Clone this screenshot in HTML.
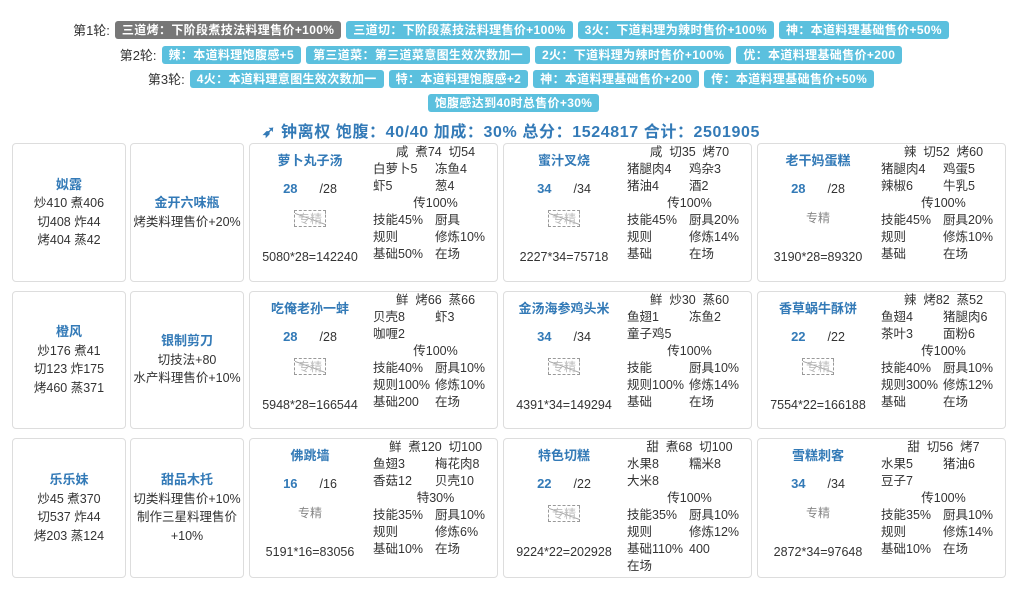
<!DOCTYPE html>
<html><head><meta charset="utf-8"><style>
*{box-sizing:border-box;margin:0;padding:0}
body{width:1022px;height:593px;background:#fff;font-family:"Liberation Sans","Noto Sans CJK SC",sans-serif;font-size:12.5px;color:#333;position:relative;overflow:hidden}
.line{position:absolute;left:0;width:1022px;display:flex;justify-content:center;align-items:center;font-size:13px}
.tag{display:inline-block;background:#5bc0de;color:#fff;font-weight:bold;font-size:12px;letter-spacing:0.35px;padding:0 7px;height:18px;line-height:18px;border-radius:3px;margin-left:5px}
.tag.g{background:#777}
.title{position:absolute;top:118px;left:0;width:1022px;text-align:center;color:#337ab7;font-weight:bold;font-size:16px;letter-spacing:0.6px}
.card{position:absolute;border:1px solid #ddd;border-radius:4px;text-align:center}
.cv{display:flex;flex-direction:column;justify-content:center;line-height:18.5px}
.nm{color:#337ab7;font-weight:bold;font-size:13px}
.rc .l{position:absolute;left:0;width:120px;text-align:center}
.rc .n{top:6px;color:#337ab7;font-weight:bold;font-size:13px}
.rc .q{top:37px}
.rc .q b{color:#337ab7;font-size:13px;margin-right:22px}
.rc .z{top:66px;color:#999;font-size:12px}
.rc .z span{display:inline-block;border:1px dashed #999;padding:0 3px;height:17px;line-height:16px;color:#bbb;background:linear-gradient(20deg,transparent 46%,#888 48%,transparent 52%)}
.rc .z span.p{border:none;background:none;color:#888}
.rc .f{top:106px}
.rr{position:absolute;left:123px;top:0;width:125px;text-align:left;line-height:17px}
.rr div{height:17px;white-space:nowrap}
.rr .c{text-align:center}
.rr i{font-style:normal;display:inline-block;width:62px}
</style></head><body>
<div class="line" style="top:20px">第1轮:<span class="tag g">三道烤：下阶段煮技法料理售价+100%</span><span class="tag">三道切：下阶段蒸技法料理售价+100%</span><span class="tag">3火：下道料理为辣时售价+100%</span><span class="tag">神：本道料理基础售价+50%</span></div>
<div class="line" style="top:45px">第2轮:<span class="tag">辣：本道料理饱腹感+5</span><span class="tag">第三道菜：第三道菜意图生效次数加一</span><span class="tag">2火：下道料理为辣时售价+100%</span><span class="tag">优：本道料理基础售价+200</span></div>
<div class="line" style="top:69px">第3轮:<span class="tag">4火：本道料理意图生效次数加一</span><span class="tag">特：本道料理饱腹感+2</span><span class="tag">神：本道料理基础售价+200</span><span class="tag">传：本道料理基础售价+50%</span></div>
<div class="line" style="top:94px"><span class="tag">饱腹感达到40时总售价+30%</span></div>
<div class="title">➶ 钟离权 饱腹：40/40 加成：30% 总分：1524817 合计：2501905</div>

<div class="card cv" style="left:12px;top:143px;width:114px;height:139px"><div class="nm">姒露</div><div>炒410 煮406</div><div>切408 炸44</div><div>烤404 蒸42</div></div>
<div class="card cv" style="left:130px;top:143px;width:114px;height:139px"><div class="nm">金开六味瓶</div><div>烤类料理售价+20%</div></div>
<div class="card cv" style="left:12px;top:291px;width:114px;height:138px"><div class="nm">橙风</div><div>炒176 煮41</div><div>切123 炸175</div><div>烤460 蒸371</div></div>
<div class="card cv" style="left:130px;top:291px;width:114px;height:138px"><div class="nm">银制剪刀</div><div>切技法+80</div><div>水产料理售价+10%</div></div>
<div class="card cv" style="left:12px;top:438px;width:114px;height:140px"><div class="nm">乐乐妹</div><div>炒45 煮370</div><div>切537 炸44</div><div>烤203 蒸124</div></div>
<div class="card cv" style="left:130px;top:438px;width:114px;height:140px"><div class="nm">甜品木托</div><div>切类料理售价+10%</div><div>制作三星料理售价</div><div>+10%</div></div>

<div class="card rc" style="left:249px;top:143px;width:249px;height:139px"><div class="l n">萝卜丸子汤</div><div class="l q"><b>28</b>/28</div><div class="l z"><span>专精</span></div><div class="l f">5080*28=142240</div>
<div class="rr"><div class="c">咸 &nbsp;煮74 &nbsp;切54</div><div><i>白萝卜5</i>冻鱼4</div><div><i>虾5</i>葱4</div><div class="c">传100%</div><div><i>技能45%</i>厨具</div><div><i>规则</i>修炼10%</div><div><i>基础50%</i>在场</div></div></div>
<div class="card rc" style="left:503px;top:143px;width:249px;height:139px"><div class="l n">蜜汁叉烧</div><div class="l q"><b>34</b>/34</div><div class="l z"><span>专精</span></div><div class="l f">2227*34=75718</div>
<div class="rr"><div class="c">咸 &nbsp;切35 &nbsp;烤70</div><div><i>猪腿肉4</i>鸡杂3</div><div><i>猪油4</i>酒2</div><div class="c">传100%</div><div><i>技能45%</i>厨具20%</div><div><i>规则</i>修炼14%</div><div><i>基础</i>在场</div></div></div>
<div class="card rc" style="left:757px;top:143px;width:249px;height:139px"><div class="l n">老干妈蛋糕</div><div class="l q"><b>28</b>/28</div><div class="l z"><span class="p">专精</span></div><div class="l f">3190*28=89320</div>
<div class="rr"><div class="c">辣 &nbsp;切52 &nbsp;烤60</div><div><i>猪腿肉4</i>鸡蛋5</div><div><i>辣椒6</i>牛乳5</div><div class="c">传100%</div><div><i>技能45%</i>厨具20%</div><div><i>规则</i>修炼10%</div><div><i>基础</i>在场</div></div></div>

<div class="card rc" style="left:249px;top:291px;width:249px;height:138px"><div class="l n">吃俺老孙一蚌</div><div class="l q"><b>28</b>/28</div><div class="l z"><span>专精</span></div><div class="l f">5948*28=166544</div>
<div class="rr"><div class="c">鲜 &nbsp;烤66 &nbsp;蒸66</div><div><i>贝壳8</i>虾3</div><div><i>咖喱2</i></div><div class="c">传100%</div><div><i>技能40%</i>厨具10%</div><div><i>规则100%</i>修炼10%</div><div><i>基础200</i>在场</div></div></div>
<div class="card rc" style="left:503px;top:291px;width:249px;height:138px"><div class="l n">金汤海参鸡头米</div><div class="l q"><b>34</b>/34</div><div class="l z"><span>专精</span></div><div class="l f">4391*34=149294</div>
<div class="rr"><div class="c">鲜 &nbsp;炒30 &nbsp;蒸60</div><div><i>鱼翅1</i>冻鱼2</div><div><i>童子鸡5</i></div><div class="c">传100%</div><div><i>技能</i>厨具10%</div><div><i>规则100%</i>修炼14%</div><div><i>基础</i>在场</div></div></div>
<div class="card rc" style="left:757px;top:291px;width:249px;height:138px"><div class="l n">香草蜗牛酥饼</div><div class="l q"><b>22</b>/22</div><div class="l z"><span>专精</span></div><div class="l f">7554*22=166188</div>
<div class="rr"><div class="c">辣 &nbsp;烤82 &nbsp;蒸52</div><div><i>鱼翅4</i>猪腿肉6</div><div><i>茶叶3</i>面粉6</div><div class="c">传100%</div><div><i>技能40%</i>厨具10%</div><div><i>规则300%</i>修炼12%</div><div><i>基础</i>在场</div></div></div>

<div class="card rc" style="left:249px;top:438px;width:249px;height:140px"><div class="l n">佛跳墙</div><div class="l q"><b>16</b>/16</div><div class="l z"><span class="p">专精</span></div><div class="l f">5191*16=83056</div>
<div class="rr"><div class="c">鲜 &nbsp;煮120 &nbsp;切100</div><div><i>鱼翅3</i>梅花肉8</div><div><i>香菇12</i>贝壳10</div><div class="c">特30%</div><div><i>技能35%</i>厨具10%</div><div><i>规则</i>修炼6%</div><div><i>基础10%</i>在场</div></div></div>
<div class="card rc" style="left:503px;top:438px;width:249px;height:140px"><div class="l n">特色切糕</div><div class="l q"><b>22</b>/22</div><div class="l z"><span>专精</span></div><div class="l f">9224*22=202928</div>
<div class="rr"><div class="c">甜 &nbsp;煮68 &nbsp;切100</div><div><i>水果8</i>糯米8</div><div><i>大米8</i></div><div class="c">传100%</div><div><i>技能35%</i>厨具10%</div><div><i>规则</i>修炼12%</div><div><i>基础110%</i>400</div><div>在场</div></div></div>
<div class="card rc" style="left:757px;top:438px;width:249px;height:140px"><div class="l n">雪糕刺客</div><div class="l q"><b>34</b>/34</div><div class="l z"><span class="p">专精</span></div><div class="l f">2872*34=97648</div>
<div class="rr"><div class="c">甜 &nbsp;切56 &nbsp;烤7</div><div><i>水果5</i>猪油6</div><div><i>豆子7</i></div><div class="c">传100%</div><div><i>技能35%</i>厨具10%</div><div><i>规则</i>修炼14%</div><div><i>基础10%</i>在场</div></div></div>
</body></html>
